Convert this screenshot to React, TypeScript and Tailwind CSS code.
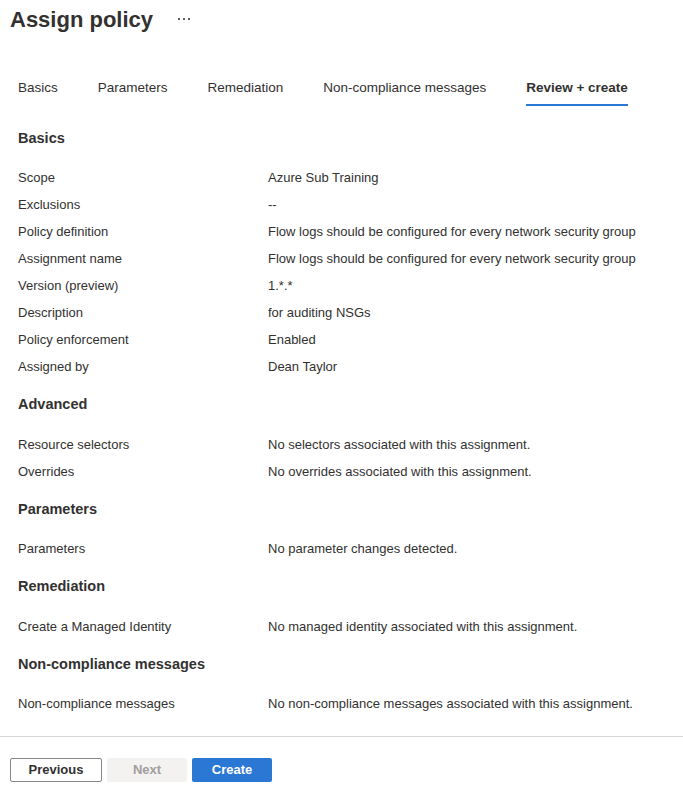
import React from "react";

type Row = { label: string; value: string };
type Section = { title: string; rows: Row[] };

const sections: Section[] = [
  {
    title: "Basics",
    rows: [
      { label: "Scope", value: "Azure Sub Training" },
      { label: "Exclusions", value: "--" },
      { label: "Policy definition", value: "Flow logs should be configured for every network security group" },
      { label: "Assignment name", value: "Flow logs should be configured for every network security group" },
      { label: "Version (preview)", value: "1.*.*" },
      { label: "Description", value: "for auditing NSGs" },
      { label: "Policy enforcement", value: "Enabled" },
      { label: "Assigned by", value: "Dean Taylor" },
    ],
  },
  {
    title: "Advanced",
    rows: [
      { label: "Resource selectors", value: "No selectors associated with this assignment." },
      { label: "Overrides", value: "No overrides associated with this assignment." },
    ],
  },
  {
    title: "Parameters",
    rows: [{ label: "Parameters", value: "No parameter changes detected." }],
  },
  {
    title: "Remediation",
    rows: [{ label: "Create a Managed Identity", value: "No managed identity associated with this assignment." }],
  },
  {
    title: "Non-compliance messages",
    rows: [{ label: "Non-compliance messages", value: "No non-compliance messages associated with this assignment." }],
  },
];

const tabs = ["Basics", "Parameters", "Remediation", "Non-compliance messages", "Review + create"];

export default function App() {
  return (
    <div
      className="w-[683px] h-[790px] bg-white text-[#323130] overflow-hidden flex flex-col"
      style={{ fontFamily: '"Segoe UI", "Liberation Sans", sans-serif' }}
    >
      <div className="flex items-center h-[40px] pl-[10px]">
        <h1 className="text-[22px] font-semibold leading-none">Assign policy</h1>
        <div className="ml-[25px] flex gap-[3px] -mt-[3px]">
          <span className="w-[2px] h-[2px] bg-[#605e5c]" />
          <span className="w-[2px] h-[2px] bg-[#605e5c]" />
          <span className="w-[2px] h-[2px] bg-[#605e5c]" />
        </div>
      </div>

      <div className="flex items-start h-[66px] pt-[39px] pl-[18px] text-[13.5px] leading-[18px]">
        {tabs.map((t, i) => {
          const active = i === tabs.length - 1;
          return (
            <div key={t} className={i === 0 ? "" : "ml-[40px]"}>
              <div className={active ? "font-semibold" : ""}>{t}</div>
              {active && <div className="h-[2px] bg-[#2b78d4] mt-[7px]" />}
            </div>
          );
        })}
      </div>

      <div className="flex-1 pl-[18px] pt-[20.5px] text-[13px]">
        {sections.map((s, i) => (
          <div key={s.title} className={i === 0 ? "" : "mt-[12.5px]"}>
            <div className="h-[24px] flex items-center text-[14.5px] font-bold">{s.title}</div>
            <div className="h-[14px]" />
            {s.rows.map((r) => (
              <div key={r.label} className="h-[27px] flex items-center">
                <div className="w-[250px]">{r.label}</div>
                <div>{r.value}</div>
              </div>
            ))}
          </div>
        ))}
      </div>

      <div className="border-t border-[#d6d6d6] h-[54px] flex items-start pt-[21px] pl-[10px] gap-[5px] text-[13px] font-semibold">
        <button className="w-[92px] h-[24px] border border-[#8a8886] rounded-[2px] bg-white text-[#323130]">Previous</button>
        <button className="w-[80px] h-[24px] rounded-[2px] bg-[#f3f2f1] text-[#a19f9d]">Next</button>
        <button className="w-[80px] h-[24px] rounded-[2px] bg-[#2b78d4] text-white">Create</button>
      </div>
    </div>
  );
}
